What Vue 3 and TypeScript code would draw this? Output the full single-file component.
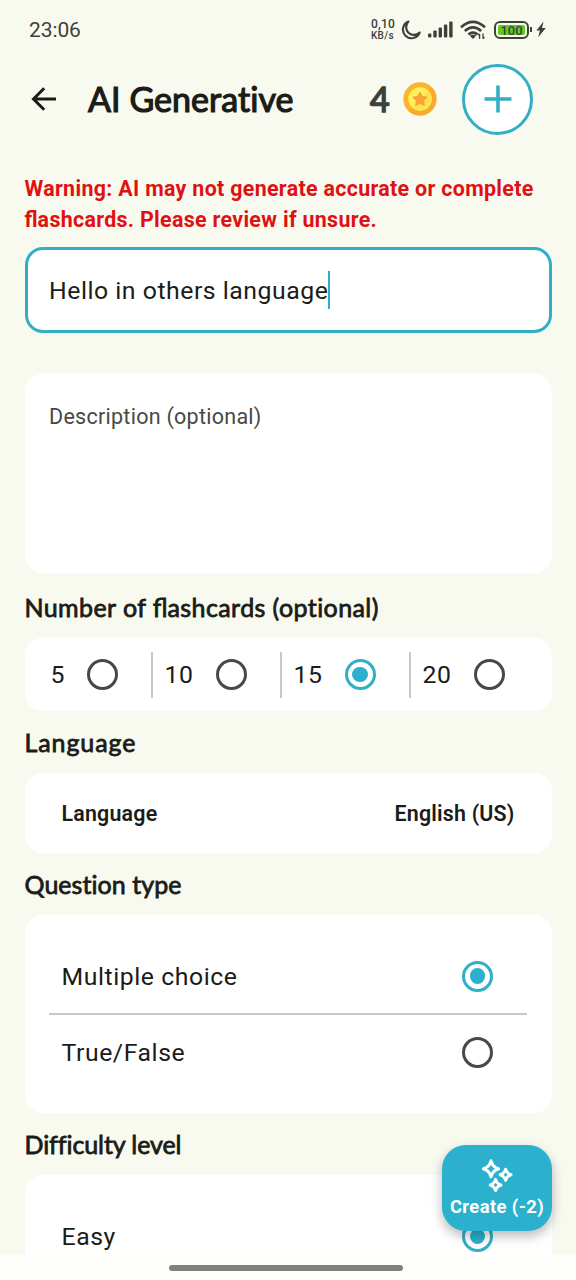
<script setup lang="ts">
import { ref } from 'vue'

const topic = ref('Hello in others language')
const count = ref(15)
const counts: number[] = [5, 10, 15, 20]
const questionType = ref('Multiple choice')
const questionTypes: string[] = ['Multiple choice', 'True/False']
const bars: number[] = [4, 7, 10, 13, 16]
</script>

<template>
  <div class="screen">
    <div class="status">
      <span class="clock">23:06</span>
      <div class="indicators">
        <div class="speed"><span>0,10</span><span class="unit">KB/s</span></div>
        <svg class="moon" viewBox="0 0 20 20"><path d="M7.4 1.6A8.6 8.6 0 1 0 18.6 12.6 A7.8 7.8 0 0 1 7.4 1.6Z" /></svg>
        <svg class="signal" viewBox="0 0 25 17">
          <rect v-for="(h, i) in bars" :key="h" :x="i * 5.3" :y="16.5 - h" width="3.4" :height="h" rx="1" />
        </svg>
        <svg class="wifi" viewBox="0 0 26 20">
          <g fill="none" stroke="#3e403a" stroke-width="2.6">
            <path d="M1 7.2Q13-3.6 25 7.2" /><path d="M4.8 11Q13 3.8 21.2 11" /><path d="M8.4 14.5Q13 10.6 17.6 14.5" />
          </g>
          <path d="M9.8 15.8Q13 13.6 16.2 15.8L13 19Z" fill="#3e403a" />
          <path d="M19.6 19v-5M18.2 15.4l1.4-1.6M23 13.6v5M24.5 17.2L23 18.9" fill="none" stroke="#3e403a" stroke-width="1.3" />
        </svg>
        <div class="battery"><span>100</span></div>
        <i class="nub"></i>
        <svg class="bolt" viewBox="0 0 10 17"><path d="M7.6.6L.4 9.4h3.5L2.2 16.2 9.8 7H6Z" /></svg>
      </div>
    </div>

    <header class="bar">
      <svg class="back" viewBox="0 0 26 26"><path d="M25 13H3M13.2 2.3L2.5 13l10.7 10.7" /></svg>
      <h1>AI Generative</h1>
      <span class="coins">4</span>
      <svg class="coin" viewBox="0 0 34 34">
        <circle cx="17" cy="17" r="16.7" fill="#fab52c" />
        <path d="M28.8 5.2A16.7 16.7 0 0 1 5.2 28.8Z" fill="#f7a932" />
        <circle cx="17" cy="17" r="11.7" fill="#fdf05b" />
        <path d="M25.3 8.7A11.7 11.7 0 0 1 8.7 25.3Z" fill="#fbe54c" />
        <path d="M17 10.5l2.1 4.1 4.5.7-3.2 3.3.7 4.5-4.1-2-4.1 2 .7-4.5-3.2-3.3 4.5-.7Z" fill="#f9a333" stroke="#f9a333" stroke-width="1.4" stroke-linejoin="round" />
      </svg>
      <button class="add" aria-label="Add coins">
        <svg viewBox="0 0 28 28"><path d="M14 .5v27M.5 14h27" /></svg>
      </button>
    </header>

    <main>
      <p class="warning">Warning: AI may not generate accurate or complete<br /><span class="lig">fl</span>ashcards. Please review if unsure.</p>
      <div class="field"><span>{{ topic }}</span><i class="caret"></i></div>
      <div class="description">Description (optional)</div>

      <h2 class="h-number">Number of <span class="lig">fl</span>ashcards (optional)</h2>
      <div class="card counts">
        <div v-for="n in counts" :key="n" class="count" :class="{ first: n === 5 }" @click="count = n">
          <span>{{ n }}</span><i class="radio" :class="{ on: count === n }"></i>
        </div>
      </div>

      <h2 class="h-language">Language</h2>
      <div class="card language"><span>Language</span><span>English (US)</span></div>

      <h2 class="h-question">Question type</h2>
      <div class="card questions">
        <div v-for="q in questionTypes" :key="q" class="option" @click="questionType = q">
          <span>{{ q }}</span><i class="radio" :class="{ on: questionType === q }"></i>
        </div>
      </div>

      <h2 class="h-level">Difficulty level</h2>
      <div class="card levels">
        <div class="option"><span>Easy</span><i class="radio on"></i></div>
      </div>
    </main>

    <button class="fab">
      <svg viewBox="0 0 32 34">
        <path d="M10 2.8Q11.7 9.2 17.6 10.8Q11.7 12.4 10 18.8Q8.3 12.4 2.4 10.8Q8.3 9.2 10 2.8Z" />
        <path d="M24.6 11.2Q25.8 15.6 30 16.8Q25.8 18 24.6 22.4Q23.4 18 19.2 16.8Q23.4 15.6 24.6 11.2Z" />
        <path d="M14.6 21.4Q15.8 25.8 20 27Q15.8 28.2 14.6 32.6Q13.4 28.2 9.2 27Q13.4 25.8 14.6 21.4Z" />
      </svg>
      <span>Create (-2)</span>
    </button>
    <div class="nav"><i></i></div>
  </div>
</template>

<style>
body {
  margin: 0;
}
</style>

<style scoped>
* {
  box-sizing: border-box;
}
.screen {
  position: relative;
  width: 576px;
  height: 1280px;
  overflow: hidden;
  background: #f8faf0;
  color: #1b1c18;
  font-family: Roboto, sans-serif;
}
.status {
  height: 59px;
  padding: 0 30px 0 29px;
  display: flex;
  align-items: center;
  justify-content: space-between;
  color: #3e403a;
}
.clock {
  font-size: 21px;
  line-height: 24px;
  letter-spacing: -0.1px;
}
.indicators {
  display: flex;
  align-items: center;
  height: 24px;
}
.indicators svg {
  fill: #3e403a;
  flex: none;
}
.speed {
  width: 24px;
  display: flex;
  flex-direction: column;
  font-size: 12px;
  line-height: 11px;
  font-weight: 500;
  letter-spacing: 0.2px;
}
.speed .unit {
  font-size: 10px;
  letter-spacing: 0.3px;
}
.indicators .moon {
  width: 20px;
  height: 20px;
  margin-left: 6px;
  fill: none;
  stroke: #3e403a;
  stroke-width: 2.2;
  stroke-linejoin: round;
}
.signal {
  width: 25px;
  height: 17px;
  margin-left: 7px;
}
.wifi {
  width: 26px;
  height: 20px;
  margin-left: 7px;
}
.battery {
  width: 35px;
  height: 18px;
  margin-left: 8px;
  padding: 2px;
  border: 2px solid #3e403a;
  border-radius: 6px;
  display: flex;
}
.battery span {
  flex: 1;
  border-radius: 2px;
  background: #62cb1f;
  font-size: 13px;
  line-height: 11px;
  font-weight: 500;
  text-align: center;
}
.nub {
  width: 2px;
  height: 5px;
  margin-left: 1px;
  background: #3e403a;
}
.bolt {
  width: 10px;
  height: 17px;
  margin-left: 4px;
}
.bar {
  height: 80px;
  display: flex;
  align-items: center;
  padding-left: 31px;
}
.back {
  width: 26px;
  height: 26px;
  fill: none;
  stroke: #1b1c18;
  stroke-width: 3;
}
h1,
h2 {
  margin: 0;
  font-family: Lato, sans-serif;
  font-weight: 400;
  white-space: nowrap;
}
h1 {
  width: 282px;
  margin-left: 31px;
  font-size: 34px;
  line-height: 40px;
  letter-spacing: 0.05px;
  -webkit-text-stroke: 1.2px #1b1c18;
}
.coins {
  width: 33px;
  font-family: Lato, sans-serif;
  font-size: 34px;
  line-height: 40px;
  color: #3e403a;
  -webkit-text-stroke: 1.5px #3e403a;
}
.coin {
  width: 34px;
  height: 34px;
}
.add {
  width: 71px;
  height: 71px;
  margin-left: 25px;
  padding: 0;
  border: 3px solid #33afc5;
  border-radius: 50%;
  background: #fff;
  display: grid;
  place-items: center;
}
.add svg {
  width: 28px;
  height: 28px;
  stroke: #33afc5;
  stroke-width: 3.6;
}
main {
  padding: 34px 24.5px 0 24.5px;
}
.warning {
  height: 62px;
  margin: 0 0 12px;
  font-size: 21.4px;
  line-height: 31px;
  font-weight: 700;
  letter-spacing: 0.32px;
  color: #df1112;
  white-space: nowrap;
}
.lig {
  letter-spacing: 0;
}
.field {
  height: 86px;
  padding-left: 21.5px;
  border: 3px solid #33afc5;
  border-radius: 18px;
  background: #fff;
  display: flex;
  align-items: center;
  font-size: 24.8px;
  letter-spacing: 0.52px;
}
.caret {
  width: 2.4px;
  height: 38px;
  margin-left: -0.5px;
  background: #33afc5;
}
.description {
  height: 199px;
  margin-top: 41px;
  padding: 30px 24.5px;
  border-radius: 18px;
  background: #fff;
  color: #484943;
  font-size: 21.5px;
  line-height: 26px;
  letter-spacing: 0.27px;
}
h2 {
  position: relative;
  top: -1px;
  font-size: 25px;
  line-height: 30px;
  -webkit-text-stroke: 0.8px #1b1c18;
}
.card {
  border-radius: 18px;
  background: #fff;
}
.h-number {
  margin: 20px 0 15px;
  letter-spacing: 0.41px;
}
.counts {
  height: 73px;
  display: flex;
  align-items: center;
}
.count {
  width: 129px;
  height: 46px;
  padding: 0 33px 0 12px;
  border-left: 2px solid #c9c9c4;
  display: flex;
  align-items: center;
  justify-content: space-between;
  font-size: 24.8px;
  letter-spacing: 0.52px;
}
.count.first {
  width: 126px;
  padding-left: 26px;
  border-left: 0;
}
.radio {
  width: 31px;
  height: 31px;
  flex: none;
  border: 3px solid #484943;
  border-radius: 50%;
  display: grid;
  place-items: center;
}
.radio.on {
  border-color: #33afc5;
}
.radio.on::after {
  content: '';
  width: 15.5px;
  height: 15.5px;
  border-radius: 50%;
  background: #2bb1cd;
}
.h-language {
  margin: 17px 0 15px;
  letter-spacing: 0.9px;
}
.language {
  height: 80px;
  padding: 0 37px;
  display: flex;
  align-items: center;
  justify-content: space-between;
  font-size: 21.4px;
  font-weight: 600;
  letter-spacing: 0.2px;
}
.h-question {
  margin: 17px 0 15px;
  letter-spacing: 0.05px;
}
.questions {
  height: 198px;
  padding: 24px 24.5px 0;
}
.option {
  height: 75px;
  padding: 0 34px 0 12.5px;
  display: flex;
  align-items: center;
  justify-content: space-between;
  font-size: 24.8px;
  letter-spacing: 0.56px;
}
.questions .option:first-child {
  height: 76px;
  border-bottom: 2px solid #c9c9c4;
}
.questions .option:last-child {
  height: 74px;
}
.h-level {
  margin: 17px 0 15px;
  letter-spacing: -0.08px;
}
.levels {
  height: 120px;
  padding: 24px 24.5px 0;
}
.fab {
  position: absolute;
  left: 442px;
  top: 1145px;
  width: 110px;
  height: 86px;
  padding: 12px 0 0;
  border: 0;
  border-radius: 24px;
  background: #2bb1cd;
  box-shadow: 0 5px 12px rgba(0, 0, 0, 0.28);
  color: #fff;
  display: flex;
  flex-direction: column;
  align-items: center;
  font-family: Roboto, sans-serif;
  font-size: 18.4px;
  line-height: 22px;
  font-weight: 700;
  letter-spacing: 0.4px;
  white-space: nowrap;
}
.fab svg {
  width: 32px;
  height: 36px;
  margin-bottom: 3px;
  fill: none;
  stroke: #fff;
  stroke-width: 3;
  stroke-linejoin: round;
}
.nav {
  position: absolute;
  left: 0;
  right: 0;
  bottom: 0;
  height: 25px;
  padding-top: 10px;
  background: #fdfefa;
  display: flex;
  justify-content: center;
}
.nav i {
  width: 234px;
  height: 6px;
  margin-right: 4px;
  border-radius: 3px;
  background: #80817e;
}
</style>
